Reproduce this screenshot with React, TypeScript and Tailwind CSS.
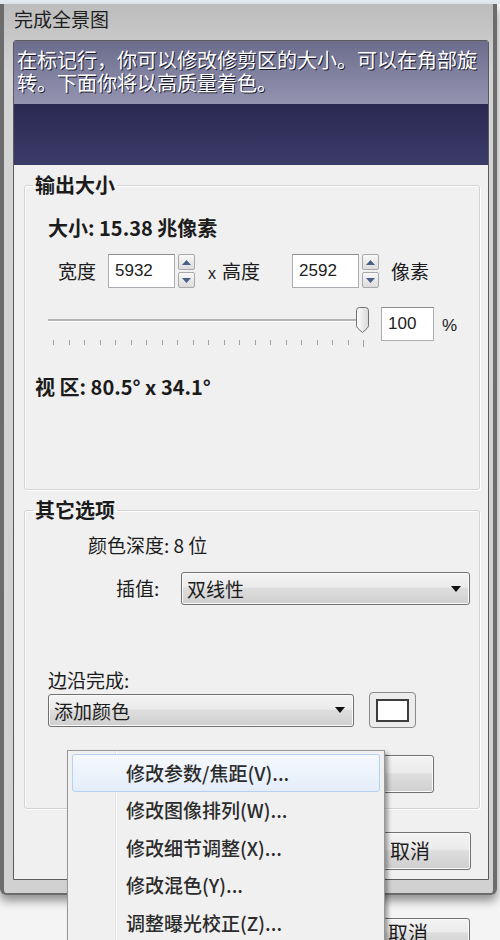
import React from 'react';

// Win7-ish push button face
const btnFace =
  'border border-[#707070] rounded-[3px] bg-[linear-gradient(#f3f3f3,#ebebeb_45%,#dddddd_50%,#cfcfcf)] shadow-[inset_0_0_0_1px_#fbfbfb]';

const menuItems = [
  '修改参数/焦距(V)...',
  '修改图像排列(W)...',
  '修改细节调整(X)...',
  '修改混色(Y)...',
  '调整曝光校正(Z)...',
];

function NumBox({ value }: { value: string }) {
  return (
    <div className="w-[67px] h-[34px] border border-[#abadb3] border-t-[#8c8c8c] bg-white flex items-center pl-[6px] font-['Liberation_Sans',sans-serif] text-[17px] text-[#222]">
      {value}
    </div>
  );
}

function Spinner() {
  return (
    <div className="flex flex-col gap-[2px] ml-[3px]">
      {[0, 1].map((i) => (
        <span
          key={i}
          className="w-[17px] h-[16px] border border-[#a9a9a9] rounded-[2px] bg-[linear-gradient(#f8f8f8,#dcdcdc)] flex items-center justify-center"
        >
          <svg width="9" height="5" viewBox="0 0 9 5">
            <path d={i === 0 ? 'M0 5L4.5 0L9 5Z' : 'M0 0L4.5 5L9 0Z'} fill="#4a5f86" />
          </svg>
        </span>
      ))}
    </div>
  );
}

function Combo({ text, width }: { text: string; width: string }) {
  return (
    <div
      className={
        'h-[33px] flex items-center justify-between pl-[5px] pr-[8px] text-[19px] ' + btnFace + ' ' + width
      }
    >
      <span className="leading-none">{text}</span>
      <svg width="10" height="6" viewBox="0 0 10 6">
        <path d="M0 0L5 6L10 0Z" fill="#111" />
      </svg>
    </div>
  );
}

const ticks = Array.from({ length: 21 }, (_, i) => i);

export default function App() {
  return (
    <div className="relative w-[500px] h-[940px] overflow-hidden bg-[#f4f4f4] font-['Noto_Sans_CJK_SC',sans-serif] text-[#1b1b1b]">
      <div className="h-[4px] bg-[#e3ebf2]" />

      {/* dialog window */}
      <div className="w-[497px] h-[891px] flex flex-col border-l-[4px] border-r-[4px] border-b-[2px] border-[#6c6c6c] rounded-b-[6px] bg-[linear-gradient(#bcbcbc,#d4d4d4_70px,#d1d1d1)] pl-[9px] pr-[4px] pb-[13px] shadow-[0_6px_10px_rgba(0,0,0,0.4)]">
        <div className="h-[36px] pl-[1px] pt-[3px] text-[19px] leading-[24px] text-[#1e1e1e]">完成全景图</div>

        <div className="flex-1 flex flex-col border border-[#5b5b5b] rounded-t-[3px] overflow-hidden">
          {/* description banner */}
          <div className="h-[124px] flex flex-col">
            <div className="h-[63px] bg-[linear-gradient(#6c6c8c,#9494b1)] pt-[7px] pl-[3px] pr-[4px] text-[20px] leading-[23px] text-white [text-shadow:1px_1px_0_#1a1a2e]">
              在标记行，你可以修改修剪区的大小。可以在角部旋转。下面你将以高质量着色。
            </div>
            <div className="flex-1 bg-[linear-gradient(#2a2952,#3c3c69)]" />
          </div>

          <div className="flex-1 flex flex-col bg-[#f0f0f0] pl-[10px] pt-[9px]">
            <fieldset className="w-[456px] h-[316px] border border-[#d3d3d3] rounded-[3px] shadow-[inset_1px_1px_0_#fff,1px_1px_0_#fff]">
              <legend className="ml-[8px] px-[2px] text-[20px] font-bold leading-[22px]">输出大小</legend>

              <div className="mt-[20px] pl-[23px] text-[20px] font-bold leading-[24px]">大小: 15.38 兆像素</div>

              <div className="mt-[14px] pl-[33px] flex items-center text-[19px]">
                <span className="w-[40px]">宽度</span>
                <div className="ml-[10px] flex items-center">
                  <NumBox value="5932" />
                  <Spinner />
                </div>
                <span className="ml-[13px]">
                  <span className="font-['Liberation_Sans',sans-serif] text-[16px] mr-[6px]">x</span>高度
                </span>
                <div className="ml-[32px] flex items-center">
                  <NumBox value="2592" />
                  <Spinner />
                </div>
                <span className="ml-[12px]">像素</span>
              </div>

              <div className="mt-[19px] pl-[23px] flex items-start">
                <div className="w-[322px] flex flex-col">
                  <div className="relative h-[26px]">
                    <div className="absolute left-0 right-[5px] top-[12px] h-[3px] border-t-2 border-[#b4b4b4] border-b border-b-white" />
                    <svg className="absolute left-[307px] top-0" width="15" height="26" viewBox="0 0 15 26">
                      <defs>
                        <linearGradient id="thumb" x1="0" x2="1">
                          <stop offset="0" stopColor="#fdfdfd" />
                          <stop offset="1" stopColor="#d8d8d8" />
                        </linearGradient>
                      </defs>
                      <path
                        d="M1.5 3.5Q1.5 0.5 4.5 0.5H10.5Q13.5 0.5 13.5 3.5V18.5Q13.5 20 12 21.5L7.5 25.5L3 21.5Q1.5 20 1.5 18.5Z"
                        fill="url(#thumb)"
                        stroke="#6f6f6f"
                      />
                    </svg>
                  </div>
                  <div className="mt-[7px] ml-[5px] w-[311px] flex justify-between">
                    {ticks.map((t) => (
                      <span key={t} className={'w-px bg-[#a2a2a2] ' + (t === 20 ? 'h-[7px]' : 'h-[5px]')} />
                    ))}
                  </div>
                </div>
                <div className="ml-[11px] w-[53px] h-[34px] border border-[#abadb3] border-t-[#8c8c8c] bg-white flex items-center pl-[6px] font-['Liberation_Sans',sans-serif] text-[17px] text-[#222]">
                  100
                </div>
                <span className="ml-[8px] mt-[6px] font-['Liberation_Sans',sans-serif] text-[17px]">%</span>
              </div>

              <div className="mt-[28px] pl-[10px] text-[20px] font-bold leading-[24px]">视 区: 80.5° x 34.1°</div>
            </fieldset>

            <fieldset className="mt-[9px] w-[456px] h-[310px] border border-[#d3d3d3] rounded-[3px] shadow-[inset_1px_1px_0_#fff,1px_1px_0_#fff]">
              <legend className="ml-[8px] px-[2px] text-[20px] font-bold leading-[22px]">其它选项</legend>

              <div className="mt-[12px] pl-[63px] text-[19px] leading-[24px]">颜色深度: 8 位</div>

              <div className="mt-[15px] flex items-center">
                <span className="ml-[91px] w-[65px] text-[19px]">插值:</span>
                <Combo text="双线性" width="w-[289px]" />
              </div>

              <div className="mt-[63px] pl-[23px] text-[19px] leading-[24px]">边沿完成:</div>
              <div className="pl-[23px] flex items-center">
                <Combo text="添加颜色" width="w-[306px]" />
                <div className="ml-[15px] w-[47px] h-[36px] rounded-[4px] border border-[#8a8a8a] bg-[#ececec] flex items-center justify-center">
                  <span className="w-[33px] h-[23px] border-2 border-[#3d3d3d] bg-white" />
                </div>
              </div>

              <div className="mt-[27px] flex justify-end pr-[45px]">
                <div className={'w-[134px] h-[38px] ' + btnFace} />
              </div>
            </fieldset>

            <div className="mt-[23px] flex justify-end pr-[17px]">
              <div className={'w-[124px] h-[38px] flex items-center justify-center pl-[2px] text-[20px] ' + btnFace}>取消</div>
            </div>
          </div>
        </div>
      </div>

      {/* window behind the dialog */}
      <div className="mt-[23px] flex justify-end pr-[30px]">
        <div className={'w-[124px] h-[30px] flex items-start justify-center pt-[2px] text-[20px] leading-[24px] ' + btnFace}>取消</div>
      </div>

      {/* context menu */}
      <div className="absolute left-[67px] top-[750px] w-[318px] h-[200px] border border-[#979797] bg-[#f0f0f0] pt-[3px] px-[4px] shadow-[3px_3px_4px_rgba(0,0,0,0.35)]">
        <div className="absolute left-[47px] top-0 bottom-0 w-[2px] border-l border-[#e0e0e0] border-r border-r-white" />
        {menuItems.map((label, i) => (
          <div
            key={label}
            className={
              'relative h-[37.5px] flex items-center pl-[53px] text-[19px] font-medium text-[#2b2b2b] rounded-[3px] border ' +
              (i === 0
                ? 'border-[#b6d1f2] bg-[linear-gradient(#f5f9fe,#e3edf9)]'
                : 'border-transparent')
            }
          >
            {label}
          </div>
        ))}
      </div>
    </div>
  );
}
